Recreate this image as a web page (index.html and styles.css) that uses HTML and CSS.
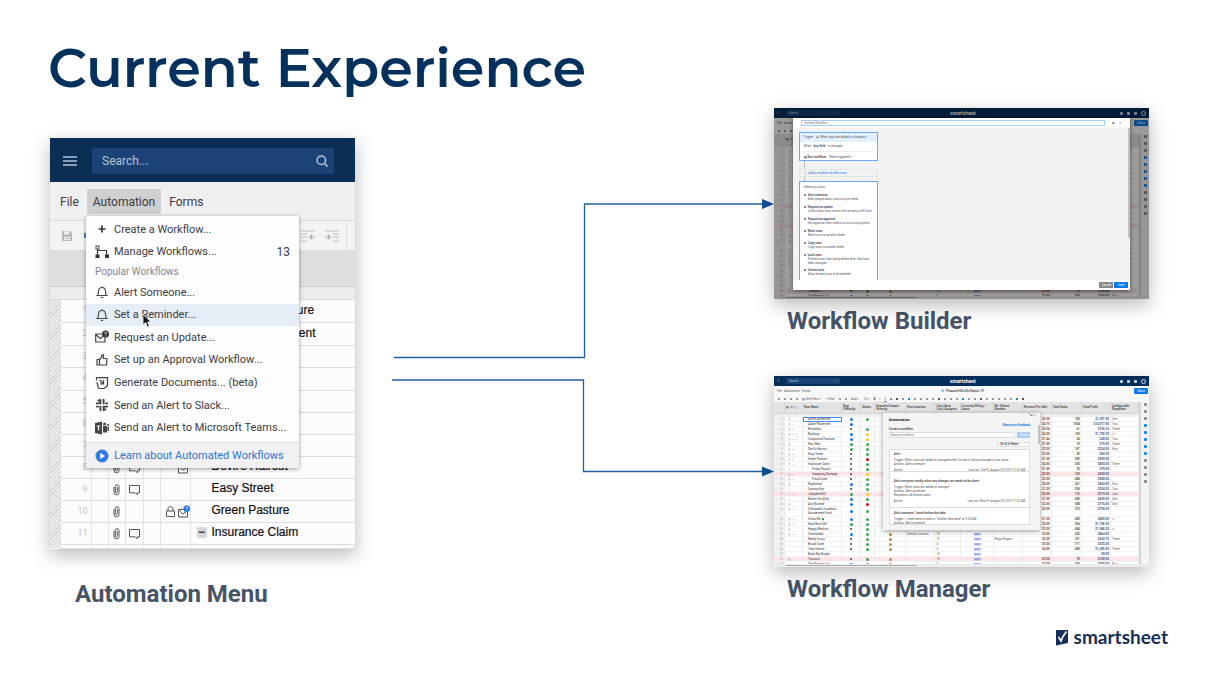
FILE: index.html
```html
<!DOCTYPE html>
<html lang="en">
<head>
<meta charset="utf-8">
<title>Current Experience</title>
<link rel="stylesheet" href="styles.css">
</head>
<body>
<div class="slide">
  <h1 class="title">Current Experience</h1>

  <main class="board">
    <figure class="column column-left">
      <div class="shot app">
        <header class="app-header">
          <svg class="burger" viewBox="0 0 14 10"><path d="M0 1h14M0 5h14M0 9h14" stroke="#b4c3d6" stroke-width="1.6"/></svg>
          <div class="search">
            <input type="text" placeholder="Search..." aria-label="Search">
            <svg class="search-icon" viewBox="0 0 12 12"><circle cx="5.3" cy="5.3" r="4.3" fill="none" stroke="#b4c3d6" stroke-width="1.5"/><path d="M8.5 8.5l3 3" stroke="#b4c3d6" stroke-width="1.6"/></svg>
          </div>
        </header>
        <nav class="menubar">
          <button type="button">File</button>
          <button type="button" class="open">Automation</button>
          <button type="button">Forms</button>
        </nav>
        <div class="toolbar">
          <svg class="ico" viewBox="0 0 14 14"><path d="M2 2h8l2 2v8H2z" fill="#b9b9bd"/><path d="M4 2.500h5v3H4zM4 8h6v3H4z" fill="#f3f2f4"/><path d="M5 9.500h4" stroke="#b9b9bd"/></svg>
          <i class="print"></i>
          <svg class="ico indent" viewBox="0 0 14 12"><path d="M0 1h14M0 4h6M0 7h6M0 11h6M8.500 7H14M8 7l3-2.500v5z" stroke="#bcbcc0" fill="#bcbcc0"/></svg>
          <svg class="ico" viewBox="0 0 14 12"><path d="M0 1h14M8 4h6M8 7h6M8 11h6M0 7h5M6 7L3 4.500v5z" stroke="#bcbcc0" fill="#bcbcc0"/></svg>
          <i class="rule"></i>
        </div>
        <div class="band"></div>
        <div class="subband"></div>
        <table class="grid">
          <tbody>
            <tr><td class="hatch"></td><td class="num">1</td><td></td><td></td><td></td><td></td><td></td><td class="name">Summer Adventure</td></tr>
            <tr class="tall"><td class="hatch"></td><td class="num">2</td><td></td><td></td><td></td><td></td><td></td><td class="name">Asset Replacement</td></tr>
            <tr><td class="hatch"></td><td class="num">3</td><td></td><td></td><td></td><td></td><td></td><td class="name"></td></tr>
            <tr class="tall"><td class="hatch"></td><td class="num">4</td><td></td><td></td><td></td><td></td><td></td><td class="name"></td></tr>
            <tr><td class="hatch"></td><td class="num">5</td><td></td><td></td><td></td><td></td><td></td><td class="name"></td></tr>
            <tr><td class="hatch"></td><td class="num">6</td><td></td><td></td><td></td><td></td><td></td><td class="name"></td></tr>
            <tr><td class="hatch"></td><td class="num">7</td><td></td><td></td><td></td><td></td><td></td><td class="name"></td></tr>
            <tr><td class="hatch"></td><td class="num">8</td><td></td><td><svg class="gi"><use href="#clip"/></svg></td><td><svg class="gi"><use href="#chat"/></svg></td><td></td><td class="right"><svg class="gi"><use href="#mail"/></svg></td><td class="name">Devil's Haircut</td></tr>
            <tr><td class="hatch"></td><td class="num">9</td><td></td><td><svg class="gi"><use href="#clip"/></svg></td><td><svg class="gi"><use href="#chat"/></svg></td><td></td><td></td><td class="name">Easy Street</td></tr>
            <tr><td class="hatch"></td><td class="num">10</td><td></td><td><svg class="gi"><use href="#clip"/></svg></td><td></td><td></td><td class="right"><svg class="gi"><use href="#lock"/></svg><svg class="gi"><use href="#mail"/></svg></td><td class="name">Green Pasture</td></tr>
            <tr><td class="hatch"></td><td class="num">11</td><td></td><td><svg class="gi"><use href="#clip"/></svg></td><td><svg class="gi"><use href="#chat"/></svg></td><td></td><td></td><td class="name parent"><button type="button" aria-label="Collapse">−</button>Insurance Claim</td></tr>
            <tr class="last"><td class="hatch"></td><td></td><td></td><td></td><td></td><td></td><td></td><td></td></tr>
          </tbody>
        </table>

        <div class="dropdown">
          <div class="items">
            <button type="button"><svg viewBox="0 0 14 14"><path d="M7 3.500v7M3.500 7h7" stroke="#333" stroke-width="1.700"/></svg><span>Create a Workflow...</span></button>
            <button type="button"><svg viewBox="0 0 14 14"><path d="M2.500 3v7M3 5.500h8.500V10" fill="none" stroke="#444" stroke-width="1.200"/><rect x="1" y="1" width="3" height="3" fill="#fff" stroke="#444"/><path d="M.5 9.500h4V13h-4zM10 9.500h4V13h-4z" fill="#333"/></svg><span>Manage Workflows...</span><b>13</b></button>
          </div>
          <h2>Popular Workflows</h2>
          <div class="items popular">
            <button type="button"><svg viewBox="0 0 14 14"><use href="#bell"/></svg><span>Alert Someone...</span></button>
            <button type="button" class="hover"><svg viewBox="0 0 14 14"><use href="#bell"/></svg><span>Set a Reminder...</span></button>
            <button type="button"><svg viewBox="0 0 14 14"><path d="M10 6v6H.7V4H7M.7 4.500L5.300 8.500 8 6.500" fill="none" stroke="#444" stroke-width="1.200"/><circle cx="10.500" cy="4" r="3.500" fill="#333"/><path d="M9.500 3.200c.2-1.300 2.200-1.100 2 .1-.1.700-1 .8-1 1.500M10.500 5.600v.8" stroke="#fff" stroke-width=".8" fill="none"/></svg><span>Request an Update...</span></button>
            <button type="button"><svg viewBox="0 0 14 14"><path d="M2 6.500h2.500v5.500H2zM4.500 6.500L6.800 4V1.800h1.700V5.500H12l-.5 6.500h-7" fill="none" stroke="#444" stroke-width="1.200" stroke-linejoin="round"/></svg><span>Set up an Approval Workflow...</span></button>
            <button type="button"><svg viewBox="0 0 14 14"><path d="M1.500 4.500V1.700h11V9.500l-3.500 3H4M4.500 4l4 3.500M8.500 4.300v3.500H5M2 6l1.500 6.500" fill="none" stroke="#444" stroke-width="1.200"/></svg><span>Generate Documents... (beta)</span></button>
            <button type="button"><svg viewBox="0 0 14 14"><path d="M5.400 2v3.400H1.800M8.600 1.800v3.600M11 5.400h1.200M1.800 8.600H3M5.400 8.600v3.600M8.600 12.200V8.600h3.600M3.500 2.500h1M10.500 11.500h-1" fill="none" stroke="#444" stroke-width="1.900" stroke-linecap="round"/></svg><span>Send an Alert to Slack...</span></button>
            <button type="button"><svg viewBox="0 0 14 14"><path d="M0 2l7-1.500v13L0 12zM8 5h4v6.500H8zM12.500 5.500H14V10h-1.500z" fill="#444"/><circle cx="9.500" cy="3" r="1.500" fill="#444"/><circle cx="13" cy="3.700" r="1" fill="#444"/><path d="M1.800 5h3.400M3.500 5v4.500" stroke="#fff" stroke-width="1.200"/></svg><span>Send an Alert to Microsoft Teams...</span></button>
          </div>
          <a class="learn" href="#"><svg viewBox="0 0 14 14"><circle cx="7" cy="7" r="6.500" fill="#2f7de0"/><path d="M5.300 4l4.700 3-4.700 3z" fill="#fff"/></svg><span>Learn about Automated Workflows</span></a>
          <svg class="cursor" viewBox="0 0 10 15"><path d="M1 1v11l2.700-2.500L5.500 14l2-.9-1.900-4.200H9z" fill="#111" stroke="#fff" stroke-width=".8"/></svg>
        </div>
      </div>
      <figcaption>Automation Menu</figcaption>
    </figure>

    <svg class="connectors" viewBox="0 0 419 460" preserveAspectRatio="none">
      <g fill="none" stroke="#1f609f" stroke-width="1.300">
        <path d="M39 249.500H229.500V96H408"/>
        <path d="M37 272H228.500V363.500H408"/>
      </g>
      <path d="M407 91l12 5-12 5zM407 358.500l12 5-12 5z" fill="#0f5296"/>
    </svg>

    <div class="column column-right">
      <figure>
        <div class="shot mini dimmed">
          <div class="sheet"></div>
          <div class="shade"></div>
          <div class="modal">
            <div class="modal-top"><input type="text" placeholder="Untitled Workflow" aria-label="Workflow name"><span>◉</span><span>✕</span></div>
            <div class="modal-body">
              <section class="trigger">
                <p class="trigger-head">Trigger:&ensp; <span>♟ When rows are added or changed ▾</span></p>
                <p>When &ensp;<b>Any field</b>&ensp; is changed</p>
                <p class="run"><b>◉ Run workflow:</b> &ensp;When triggered ▾</p>
              </section>
              <i class="stem"></i>
              <a class="condition" href="#">＋&ensp;Add a condition to filter rows</a>
              <i class="stem short"></i>
              <section class="actions">
                <h3>Select an action</h3>
                <ul>
                  <li><b>Alert someone</b><br>Alert people about rows on your sheet</li>
                  <li><b>Request an update</b><br>Collect data from others with an easy-to-fill form</li>
                  <li><b>Request an approval</b><br>Get approval from others on rows and projects</li>
                  <li><b>Move rows</b><br>Move rows to another sheet</li>
                  <li><b>Copy rows</b><br>Copy rows to another sheet</li>
                  <li class="two"><b>Lock rows</b><br>Protect rows from being edited after they have been changed</li>
                  <li><b>Unlock rows</b><br>Allow locked rows to be editable</li>
                </ul>
              </section>
              <i class="thumb"></i>
            </div>
            <div class="modal-foot"><button type="button">Cancel</button><button type="button" class="save">Save</button></div>
          </div>
        </div>
        <figcaption>Workflow Builder</figcaption>
      </figure>

      <figure>
        <div class="shot mini">
          <div class="sheet"></div>
          <aside class="panel">
            <div class="panel-tools">? ■ ✕</div>
            <h3>Automation</h3>
            <a href="#">Share your feedback</a>
            <label for="create">Create a workflow</label>
            <div class="create"><input id="create" type="text" placeholder="Name a workflow"><button type="button">Create</button></div>
            <div class="filter"><button type="button">On &amp; In Name</button></div>
            <div class="cards">
              <article><h4>Alert</h4><p>Trigger: When rows are added or changed when Critical in Status changes to any value</p><p>Actions: Alert someone</p><footer><span>Active</span><span>Last run: Tue Fri August 30/2019 11:32 AM</span></footer></article>
              <article class="mid"><h4>Alert everyone weekly when any changes are made to the sheet</h4><p>Trigger: When rows are added or changed</p><p>Actions: Alert someone</p><p>Recipients: All shared users</p><footer><span>Active</span><span>Last run: Mon Fri August 30 2019 11:32 AM</span></footer></article>
              <article><h4>Alert someone 1 week before due date</h4><p>Trigger: 1 week before a date in "Golden Gate date" at 9:00 AM</p><p>Actions: Alert someone</p></article>
            </div>
            <i class="thumb"></i>
          </aside>
        </div>
        <figcaption>Workflow Manager</figcaption>
      </figure>
    </div>
  </main>

  <footer class="brand">
    <svg viewBox="0 0 14 17"><path d="M1 1h12v13L1 16.500z" fill="#17305a"/><path d="M3.500 8l2.500 4 2-4.500 3.500-5" fill="none" stroke="#fff" stroke-width="1.600"/></svg>
    <span>smartsheet</span>
  </footer>
</div>

<svg class="defs" width="0" height="0">
  <symbol id="bell" viewBox="0 0 14 14"><path d="M2.300 10.500h9.400c-1.200-1-1.200-2-1.200-4.300C10.500 3.800 9 2.500 7 2.500S3.500 3.800 3.500 6.200c0 2.300 0 3.300-1.200 4.300zM7 1.300v1M5.800 12.500h2.400" fill="none" stroke="#444" stroke-width="1.100"/></symbol>
  <symbol id="clip" viewBox="0 0 13 13"><path d="M4 4v5.300a2.500 2.500 0 0 0 5 0V3.200a1.900 1.900 0 0 0-3.700 0v5.600c0 1.300 2 1.300 2 0V4" fill="none" stroke="#555" stroke-width="1"/></symbol>
  <symbol id="chat" viewBox="0 0 13 13"><path d="M1.500 2.500h10v7.300H9.300v2L7.300 9.800H1.500z" fill="none" stroke="#555"/></symbol>
  <symbol id="lock" viewBox="0 0 13 13"><path d="M2.500 6h8v5.500h-8zM4 6V3.800c0-3 5-3 5 0V6" fill="none" stroke="#555"/></symbol>
  <symbol id="mail" viewBox="0 0 13 13"><path d="M10.500 6.500V12h-9V4.500h5M1.500 5L6 9l3-2" fill="none" stroke="#555"/><circle cx="9.700" cy="3.700" r="3.300" fill="#2575e0"/><path d="M8.900 3c.1-1.200 1.800-1 1.700 0-.1.600-.9.700-.9 1.300M9.700 5v.7" stroke="#fff" stroke-width=".8" fill="none"/></symbol>
</svg>
<script src="sheet.js"></script>
</body>
</html>
```

FILE: styles.css
```css
* { box-sizing: border-box; }
body { margin: 0; background: #fff; font-family: Roboto, "Liberation Sans", sans-serif; }
h1, h2, h3, h4, p, ul, figure { margin: 0; padding: 0; }
ul { list-style: none; }
button, input { font: inherit; color: inherit; border: 0; padding: 0; margin: 0; background: none; }
a { text-decoration: none; }

.slide { padding: 34px 50px 0 48px; }
.title {
  color: #03305d;
  font: 600 54px/68px Montserrat, Inter, sans-serif;
  white-space: nowrap;
}
.board {
  display: grid;
  grid-template-columns: 305fr 419fr 375fr;
  align-items: start;
  padding: 6px 19px 0 2px;
}
.column-left { padding-top: 30px; }
.shot { position: relative; overflow: hidden; background: #fcfbfd; }
.column-left .shot, .mini { box-shadow: 0 6px 18px rgba(0, 0, 0, .28); }
figcaption { color: #465468; font-size: 24px; font-weight: 700; line-height: 32px; }
.column-left figcaption { padding: 29px 0 0 25px; }
.column-right { display: grid; gap: 39px; }
.column-right figcaption { padding: 6px 0 0 13px; }
.connectors { width: 100%; height: 460px; }

/* application window */
.app { height: 411px; font-size: 11px; color: #3c3c40; }
.app-header {
  display: flex; align-items: center; gap: 15px;
  height: 44px; padding: 1px 21px 0 13px; background: #0b2e55;
}
.burger { width: 14px; height: 10px; flex: none; }
.search { flex: 1; display: flex; align-items: center; height: 26px; padding: 0 6px 0 10px; background: #1b4375; border-radius: 1px; font-size: 12px; }
.search input { flex: 1; min-width: 0; color: #b4c3d6; }
.search input::placeholder { color: #b4c3d6; opacity: 1; }
.search-icon { width: 12px; height: 12px; }
.menubar { display: flex; align-items: center; height: 39px; padding-top: 1px; background: #efeef0; border-bottom: 1px solid #dcdbdd; font-size: 12px; }
.menubar button { height: 25px; padding: 0 8px; }
.menubar button:first-child { padding: 0 8px 0 10px; }
.menubar button.open { padding: 0 6px; background: #cfced1; border-radius: 2px; }
.toolbar { display: flex; align-items: center; gap: 10px; height: 30px; padding: 0 8px 0 10px; background: #f3f2f4; border-bottom: 1px solid #dcdbdd; }
.ico { width: 14px; height: 14px; }
.print { width: 7px; height: 5px; background: #4f83b8; }
.indent { margin-left: auto; }
.rule { width: 1px; height: 29px; margin-left: -3px; background: #dedde0; }
.band { height: 35px; background: #dededf; }
.subband { height: 14px; background: #ececee; border-bottom: 1px solid #d9d9dc; border-top: 1px solid #cfcfd2; }
.grid { width: 100%; border-collapse: collapse; table-layout: fixed; }
.grid tr { height: 22px; }
.grid tr.tall { height: 23px; }
.grid tr.last { height: 4px; }
.grid td { padding: 0; border-bottom: 1px solid #dddce0; border-right: 1px solid #e4e3e7; text-align: center; line-height: 13px; white-space: nowrap; }
.grid td:nth-child(1) { width: 11px; }
.grid td:nth-child(2) { width: 30px; }
.grid td:nth-child(3), .grid td:nth-child(4), .grid td:nth-child(6) { width: 17px; }
.grid td:nth-child(5) { width: 18px; }
.grid td:nth-child(7) { width: 30px; }
.grid .hatch { border: 0; background: repeating-linear-gradient(135deg, #d2d2d4 0 1px, #ececee 1px 3px); }
.grid .num { color: #c4c3c8; font-size: 9px; text-align: right; padding-right: 3px; }
.grid .name { padding: 0 0 1px 21px; border-right: 0; color: #111; font: 12px/13px "Liberation Sans", Arial, sans-serif; -webkit-text-stroke: .2px #111; text-align: left; }
.grid .parent { padding-left: 6px; }
.parent button { width: 10px; height: 11px; margin-right: 5px; background: #d6d5d9; border-radius: 2px; line-height: 9px; }
.grid .right { text-align: right; }
.gi { display: inline-block; width: 13px; height: 13px; vertical-align: middle; }

.dropdown {
  position: absolute; left: 36px; top: 78px; width: 213px;
  padding-top: 2px; background: #fdfcfe; border-radius: 2px;
  box-shadow: 0 1px 4px rgba(0, 0, 0, .4);
}
.items { display: grid; grid-template-columns: 100%; grid-auto-rows: 1fr; height: 45px; }
.popular { height: 158px; }
.items button, .learn { display: flex; align-items: center; gap: 5px; padding: 0 9px; text-align: left; white-space: nowrap; }
.items svg, .learn svg { width: 14px; height: 14px; flex: none; }
.items b { margin-left: auto; font-size: 12px; font-weight: 400; }
.items .hover { background: #e5edf7; }
.dropdown h2 { padding: 1px 9px; color: #87868b; font-size: 10px; font-weight: 400; line-height: 16px; }
.learn { height: 26px; margin-top: 3px; background: #f1f0f2; border-top: 1px solid #dddce0; color: #2f76cf; }
.cursor { position: absolute; left: 56px; top: 97px; width: 10px; height: 15px; }

/* thumbnails */
.mini { height: 191px; font-size: 3px; line-height: 4px; color: #555; }
.sheet { display: flex; flex-direction: column; height: 100%; }
.s-head { display: grid; grid-template-columns: 9px 1fr 1fr 1fr; align-items: center; height: 10px; padding: 0 3px; background: #032e5b; color: #b7c8dc; }
.s-search { width: 54px; height: 6px; padding: 1px 3px; background: #1b4375; display: flex; justify-content: space-between; }
.s-logo { color: #fff; font-size: 5px; font-weight: 700; padding-left: 44px; }
.s-user { display: flex; justify-content: flex-end; align-items: center; gap: 4px; }
.s-user i { width: 3px; height: 3px; background: #c7d4e4; border-radius: 1px; }
.s-user i:last-child { width: 5px; height: 5px; border: 1px solid #dbe4ef; background: #0b2e55; border-radius: 50%; }
.s-menu { display: grid; grid-template-columns: 1fr 1fr 1fr; align-items: center; height: 9px; padding: 0 1px 0 3px; background: #f8f8f8; }
.s-menu b { text-align: center; }
.s-menu b::before { content: ""; display: inline-block; width: 3px; height: 3px; margin-right: 2px; border-radius: 50%; background: #8dc4ee; }
.s-menu button { justify-self: end; width: 14px; height: 6px; background: #0a78e8; color: #fff; border-radius: 1px; }
.s-tools { display: flex; align-items: center; gap: 4px; height: 7px; padding: 0 4px; background: #f8f8f8; color: #555; white-space: nowrap; }
.s-tools i { width: 2px; height: 2px; background: #999; }
.s-tools i:nth-of-type(9n) { background: #1688e8; }
.s-tools i:nth-of-type(7n) { background: #555; }
.s-main { flex: 1; display: grid; grid-template-columns: 1fr 10px; min-height: 0; }
.s-table { display: grid; grid-template-rows: 12px 3px 1fr; border-collapse: collapse; min-width: 0; }
.s-table caption { grid-row: 2; background: #efefef; }
.s-table thead { grid-row: 1; display: grid; }
.s-table tbody { grid-row: 3; display: grid; grid-template-rows: repeat(30, 1fr); min-height: 0; }
.s-table tr { display: grid; grid-template-columns: 11fr 18fr 39fr 19fr 14fr 31fr 29fr 25fr 33fr 29fr 29fr 30fr 29fr 28fr; min-height: 0; background: #fff; }
.s-table th, .s-table td { min-width: 0; overflow: hidden; padding: 0 1px; white-space: nowrap; text-align: left; border-right: 1px solid #ebebeb; border-bottom: 1px solid #f3f3f3; }
.s-table th { display: flex; align-items: center; background: #e3e3e3; border-color: #d4d4d4; font-weight: 700; white-space: normal; line-height: 3px; }
.s-table td:nth-child(1) { background: #efefef; color: #aaa; text-align: right; }
.s-table td:nth-child(2) { color: #999; padding-left: 3px; }
.s-table td:nth-child(3) { padding-left: 5px; color: #333; }
.s-table td:nth-child(n+4):nth-child(-n+6) { display: flex; align-items: center; justify-content: center; }
.s-table td:nth-child(n+11):nth-child(-n+13) { text-align: right; font-weight: 700; }
.s-table td:nth-child(9) { color: #1688e8; padding-left: 13px; }
.s-table .indent-row td:nth-child(3) { padding-left: 9px; }
.s-table .red td { background: #fde5e7; }
.s-table .double { grid-row: span 2; }
.s-table .double td { white-space: normal; }
.s-table .selected td:nth-child(3) { outline: 1px solid #3f8be6; outline-offset: -1px; }
.dot { width: 3px; height: 3px; border-radius: 50%; }
.dot.blue { background: #1477ea; }
.dot.green { background: #35a853; }
.dot.yellow { background: #f6cc1c; }
.dot.crimson { background: #d0021b; }
.dot.orange { background: #c98345; }
.dot.dark { width: 2px; height: 2px; background: #444; }
.s-rail { display: flex; flex-direction: column; align-items: center; gap: 4px; padding-top: 1px; background: #f3f3f3; border-left: 2px solid #d5d5d5; }
.s-rail i { width: 3px; height: 3px; border-radius: 1px; background: #888; }
.s-rail i:nth-child(n+4):nth-child(-n+8) { background: #1688e8; }
.s-scroll { height: 3px; background: #ececec; padding: 1px 0 0 12px; }
.s-scroll i { display: block; width: 36%; height: 1px; background: #aaa; }

.shade { position: absolute; inset: 0; background: rgba(0, 0, 0, .38); }
.modal { position: absolute; left: 5%; right: 5%; top: 10px; bottom: 9px; display: flex; flex-direction: column; background: #fff; box-shadow: 0 1px 4px rgba(0, 0, 0, .5); }
.modal-top { display: flex; align-items: center; gap: 4px; height: 10px; padding: 0 8px; }
.modal-top input { flex: 1; height: 6px; margin-right: 3px; padding-left: 2px; border: 1px solid #a9cdf5; }
.modal-body { position: relative; flex: 1; min-height: 0; display: flex; flex-direction: column; align-items: flex-start; padding: 4px 6px 0; background: #f2f2f2; }
.trigger, .condition, .actions { width: 79px; border: 1px solid #6aa9ef; background: #fff; }
.trigger { height: 29px; }
.trigger p { height: 9px; padding: 2px 4px; white-space: nowrap; }
.trigger .trigger-head { background: #e2effd; }
.trigger .run { margin: 0 3px; padding: 3px 1px; border-top: 1px solid #eee; }
.stem { width: 1px; height: 8px; margin-left: 5px; background: #bbb; }
.stem.short { height: 4px; }
.condition { height: 8px; padding: 1px 4px; border: 1px dashed #ddd; background: none; color: #1477ea; white-space: nowrap; }
.actions { flex: 1; min-height: 0; overflow: hidden; border-bottom: 0; }
.actions h3 { padding: 3px 4px 4px; font-size: 3px; font-weight: 400; }
.actions li { height: 12px; padding: 0 7px 0 8px; position: relative; white-space: nowrap; }
.actions li::before { content: ""; position: absolute; left: 4px; top: 1px; width: 2px; height: 2px; background: #888; }
.actions li.two { height: 15px; white-space: normal; }
.thumb { position: absolute; right: 0; top: 0; width: 2px; height: 110px; background: #c2c2c2; }
.modal-foot { display: flex; justify-content: flex-end; align-items: center; gap: 1px; height: 10px; padding-right: 2px; }
.modal-foot button { width: 14px; height: 6px; background: #888; color: #fff; }
.modal-foot .save { background: #0a78ee; }

.panel { position: absolute; left: 29%; right: 29%; top: 37px; height: 117px; padding: 1px 10px 0 6px; background: #f4f4f4; box-shadow: 0 1px 5px rgba(0, 0, 0, .4); display: flex; flex-direction: column; }
.panel-tools { align-self: flex-end; height: 3px; margin-right: -6px; line-height: 3px; }
.panel h3 { font-size: 4px; line-height: 6px; color: #222; }
.panel a { align-self: flex-end; color: #1477ea; font-weight: 700; }
.panel label { font-weight: 700; }
.create { display: flex; gap: 2px; margin-top: 1px; }
.create input { flex: 1; min-width: 0; height: 6px; padding-left: 1px; border: 1px solid #ddd; background: #fff; }
.create button { width: 13px; background: #a9cdf5; color: #fff; }
.filter { display: flex; justify-content: flex-end; margin: 4px 0 2px; }
.filter button { width: 33px; height: 5px; padding-left: 2px; border: 1px solid #ddd; background: #fff; text-align: left; font-weight: 700; line-height: 3px; }
.cards { height: 76px; overflow: hidden; background: #fff; border: 1px solid #ddd; }
.cards article { height: 22px; padding: 2px 4px; border-bottom: 1px solid #ddd; white-space: nowrap; }
.cards article.mid { height: 36px; padding-top: 7px; }
.cards article:last-child { padding-top: 3px; }
.cards h4 { font-size: 3px; font-weight: 700; margin-bottom: 2px; }
.cards footer { display: flex; justify-content: space-between; margin-top: 2px; }
.panel .thumb { top: 12px; height: 19px; }

.brand { display: flex; justify-content: flex-end; align-items: center; gap: 5px; padding-top: 14px; color: #17305a; font: 700 19px/26px Lato, sans-serif; }
.brand svg { width: 14px; height: 17px; }
.defs { position: absolute; }
```

FILE: sheet.js
```js
// name, row icons, first status, second status, impact, total, price, value, dropdown, row style
const rows = [
  ["Acme Adventure", "◍ ▭", "blue", "green", "", "$0.00", "100", "$1,507.00", "One", "selected"],
  ["Asset Placement", "◍   ⩚", "blue", "", "", "$4.75", "1004", "$14,077.00", "Two", ""],
  ["Brouhaha", "◍ ▭", "dark", "green", "", "$2.56", "61", "$156.16", "Three", ""],
  ["Big Easy", "◍ ▭ ⩚", "blue", "yellow", "", "$4.00", "100", "$1,700.00", "▽", ""],
  ["Compound Fracture", "◍ ▭ ⩚", "blue", "yellow", "", "$1.44", "24", "$48.00", "Two", ""],
  ["Rain Man", "◍", "green", "green", "", "$1.00", "75", "$75.00", "Three", ""],
  ["Devil's Haircut", "◍ ▭", "green", "green", "", "$2.00", "167", "$334.00", "Four", ""],
  ["Easy Street", "◍ ▭", "dark", "green", "", "$2.00", "30", "$60.00", "", ""],
  ["Green Pasture", "◍   ⩚", "dark", "crimson", "", "$1.00", "500", "$500.00", "", ""],
  ["Insurance Claim", "◍ ▭", "dark", "green", "", "$4.00", "200", "$800.00", "Three", ""],
  ["Friday Payout", "  ▭", "dark", "green", "", "$1.00", "70", "$70.00", "", "indent-row"],
  ["Imaginary Damage", "◍ ▭", "dark", "yellow", "", "$2.00", "150", "$300.00", "", "red indent-row"],
  ["Freud Case", "◍ ▭", "dark", "green", "", "$2.00", "484", "$968.00", "", "indent-row"],
  ["Nightmare", "◍", "blue", "green", "", "$2.00", "421", "$842.00", "Five", ""],
  ["Swamp Gas", "  ▭", "dark", "green", "", "$1.00", "304", "$304.00", "Two", ""],
  ["Jalapeño Hill", "  ▭ ⩚", "green", "yellow", "", "$5.00", "115", "$575.00", "Last", "red"],
  ["Brahm the Alley", "  ▭", "blue", "green", "", "$1.00", "600", "$600.00", "One", ""],
  ["Any Number", "◍", "blue", "crimson", "", "$2.00", "388", "$776.00", "One", ""],
  ["Orthopedic Surgeons Amusement Fund", "◍ ▭", "blue", "green", "", "$2.00", "375", "$750.00", "", "double"],
  ["Xmas Elk 🎄", "◍ ▭", "blue", "green", "", "$1.00", "400", "$400.00", "▽", ""],
  ["Hard Rock Hill", "◍ ▭", "green", "green", "", "$2.00", "554", "$1,108.00", "", ""],
  ["Happy Medium", "◍", "dark", "green", "", "$2.00", "484", "$1,968.00", "▽", ""],
  ["Overloaded", "◍ ▭", "blue", "green", "orange", "$2.00", "432", "$864.00", "", ""],
  ["Really Sunny", "", "dark", "green", "orange", "$2.00", "321", "$642.75", "Three", ""],
  ["Broad Scale", "  ▭", "dark", "green", "orange", "$5.00", "711", "$355.00", "", ""],
  ["Team Game", "", "dark", "green", "orange", "$4.00", "400", "$1,600.00", "Three", ""],
  ["Bob's Big Burger", "", "", "", "", "", "", "$0.00", "", ""],
  ["Toucano", "◍", "dark", "green", "orange", "$2.00", "70", "$140.00", "", "red"],
  ["The Parking Lot", "", "blue", "green", "orange", "$3.00", "260", "$780.00", "Four", ""]
];
const headings = ["", "◍ ▭ ◻", "Row Name", "Row Difficulty", "Status", "Expected Impact Severity", "Row Location", "Core Ideas (List) Assignee", "Currently Billing / Lease", "Mr. Patient Number", "Revenue Per Sale", "Total Sales", "Total Profit", "Configurable Dropdown"];

const dot = color => color ? `<i class="dot ${color}"></i>` : "";
const ticks = count => Array(count).fill("<i></i>").join("");

const body = rows.map((row, index) => {
  const [name, icons, first, second, impact, price, total, value, choice, style] = row;
  const late = index > 21;
  const cells = [index + 1, icons, name, dot(first), dot(second), dot(impact), index === 22 ? "<u>Details, location</u>" : "", late ? index % 4 * 5 : "", late ? "▮▮▮▯" : "", index === 23 ? "Reign Rogers" : "", price, total, value, choice];
  return `<tr class="${style}">${cells.map(cell => `<td>${cell}</td>`).join("")}</tr>`;
}).join("");

const sheet = `
  <div class="s-head"><span>☰</span><div class="s-search"><span>Search...</span><span>⌕</span></div><span class="s-logo">smartsheet</span><div class="s-user">${ticks(4)}</div></div>
  <div class="s-menu"><span>File&ensp; Automation&ensp; Forms</span><b>Pleasant Hills Elc Report .07</b><button type="button">Share</button></div>
  <div class="s-tools">${ticks(4)}<span>▤ Grid View ▾</span><span>▿ Filter</span>${ticks(2)}<span>Arial ▾</span><span>10 ▾</span><b>B</b><em>I</em><u>U</u><s>S</s>${ticks(22)}</div>
  <div class="s-main"><table class="s-table"><caption></caption><thead><tr>${headings.map(text => `<th>${text}</th>`).join("")}</tr></thead><tbody>${body}</tbody></table><div class="s-rail">${ticks(12)}</div></div>
  <div class="s-scroll"><i></i></div>`;

document.querySelectorAll(".sheet").forEach(node => { node.innerHTML = sheet; });
```
